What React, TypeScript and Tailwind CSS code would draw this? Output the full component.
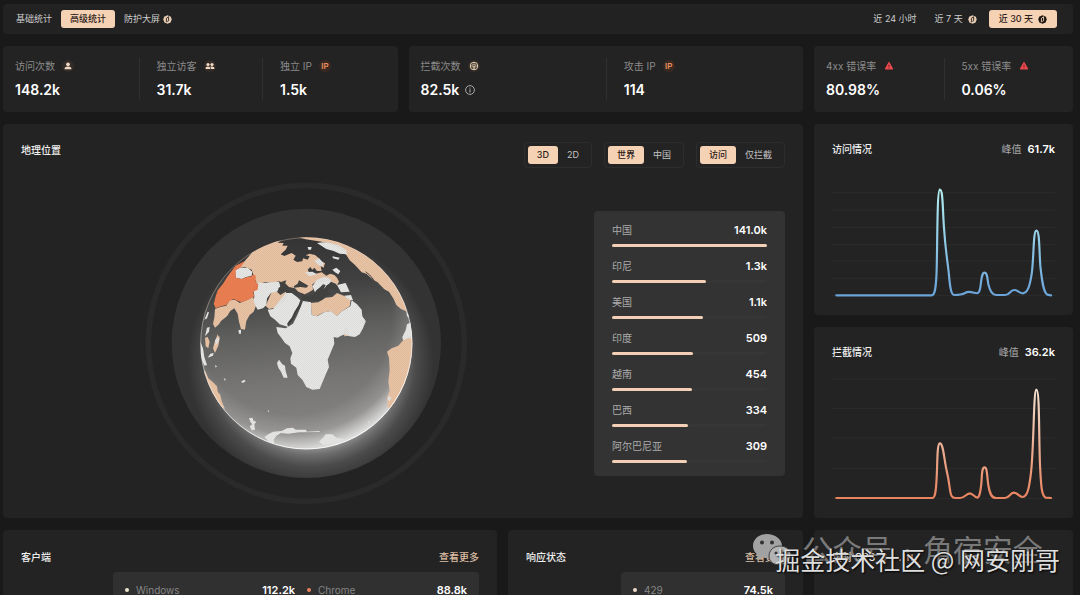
import React from "react";

type Chart = { id: string; top: number; grid: number[]; path: string; from: string; to: string };

const visitChart: Chart = {
  id: "visit",
  top: 0,
  grid: [68, 120, 172, 224, 273, 325, 376],
  from: "#b5f0f2",
  to: "#6aa3d8",
  path: "M79 376H366C376 376 379 355 381 310C384 235 382 60 391 59C401 59 399 120 404 180C408 240 413 265 418 310C421 345 424 375 434 375C448 375 458 374 467 369C476 363 484 365 493 368C504 371 509 373 513 352C517 325 517 308 526 308C534 308 534 325 537 342C541 360 546 374 560 375H588C602 375 602 360 615 360C625 360 630 369 641 370C656 369 662 348 668 310C675 255 672 183 682 182C692 182 690 240 694 290C699 335 703 368 715 374L726 376",
};

const blockChart: Chart = {
  id: "block",
  top: 159,
  grid: [177, 265, 354, 445, 535],
  from: "#f1e0cf",
  to: "#e8835f",
  path: "M79 534H368C377 534 379 515 381 480C384 435 382 371 391 370C401 370 403 410 410 445C416 470 418 482 421 505C424 528 427 534 438 534H452C466 534 470 521 481 520C491 520 495 533 504 533C511 532 513 515 516 492C518 465 517 442 526 442C534 442 533 470 537 495C541 520 546 534 560 534H587C601 534 602 519 614 518C626 518 629 531 640 531C656 531 661 498 666 455C675 370 673 210 682 209C692 209 689 350 693 440C696 500 698 528 710 533L726 534",
};

const countries = [
  { name: "中国", value: "141.0k", share: 100 },
  { name: "印尼", value: "1.3k", share: 60.5 },
  { name: "美国", value: "1.1k", share: 59 },
  { name: "印度", value: "509", share: 52.5 },
  { name: "越南", value: "454", share: 51.5 },
  { name: "巴西", value: "334", share: 49 },
  { name: "阿尔巴尼亚", value: "309", share: 48.4 },
];

function ProBadge({ dark = false }: { dark?: boolean }) {
  const fill = dark ? "#1b1512" : "#e9ccb4";
  const mark = dark ? "#f6d2b4" : "#29231f";
  return (
    <svg viewBox="0 0 18 18" className="size-[9px] shrink-0" aria-hidden="true">
      <path d="M9 0.3 15.8 3.6 17.4 9 15.2 14.8 9 17.7 2.8 14.8 0.6 9 2.2 3.6Z" fill={fill} />
      <path d="M6.800 14.500V6.500L11.200 3.500V11.500L8.500 13" stroke={mark} strokeWidth="1.800" fill="none" />
    </svg>
  );
}

function UserIcon() {
  return (
    <svg viewBox="0 0 24 24" className="size-3 shrink-0" aria-hidden="true">
      <circle cx="12" cy="12" r="12" fill="#332c28" />
      <circle cx="12" cy="8.6" r="3.7" fill="#f3d9c1" />
      <path d="M5 18.6C5 14.2 8 13 12 13s7 1.2 7 5.6Z" fill="#f3d9c1" />
    </svg>
  );
}

function UsersIcon() {
  return (
    <svg viewBox="0 0 24 24" className="size-3 shrink-0" aria-hidden="true">
      <circle cx="12" cy="12" r="12" fill="#332c28" />
      <circle cx="8" cy="9" r="3.200" fill="#f3d9c1" />
      <circle cx="16" cy="9" r="3.200" fill="#f3d9c1" />
      <path d="M3 18C3 14 5 12.800 8 12.800s4.400 1.200 4.400 5.200ZM13.600 18C13.600 15.500 13.300 14.300 12.500 13.400 13.500 12.900 14.700 12.800 16 12.800 19 12.800 21 14 21 18Z" fill="#f3d9c1" />
    </svg>
  );
}

function IpIcon() {
  return (
    <span className="flex h-3 w-3 items-center justify-center rounded-full bg-[#3a2920] text-[8px] leading-3 font-semibold text-[#e9925f]">
      IP
    </span>
  );
}

function ShieldIcon() {
  return (
    <svg viewBox="0 0 24 24" className="size-3 shrink-0" aria-hidden="true">
      <circle cx="12" cy="12" r="12" fill="#332c28" />
      <circle cx="12" cy="12" r="7.500" stroke="#ecd6b4" strokeWidth="2" fill="none" />
      <path d="M8.800 14.500A4 4 0 1 1 15.200 14.500" stroke="#ecd6b4" strokeWidth="1.800" fill="none" />
      <path d="M12 10 13.600 12.500 13 18H11L10.400 12.500Z" fill="#ecd6b4" />
    </svg>
  );
}

function WarnIcon() {
  return (
    <svg viewBox="0 0 24 24" className="size-3 shrink-0" aria-hidden="true">
      <path d="M12 4.500 19.500 18H4.500Z" fill="#ee4a4e" stroke="#ee4a4e" strokeWidth="2" strokeLinejoin="round" />
      <path d="M12 9.500V13.500M12 15.300V17" stroke="#4a1c1e" strokeWidth="1.800" />
    </svg>
  );
}

function InfoIcon() {
  return (
    <svg viewBox="0 0 20 20" className="size-[10px] shrink-0" aria-hidden="true">
      <circle cx="10" cy="10" r="8.800" fill="none" stroke="#c9c9c9" strokeWidth="1.600" />
      <path d="M10 5.200V7.200M10 8.800V15" stroke="#c9c9c9" strokeWidth="1.800" />
    </svg>
  );
}

function Stat({ label, value, icon, info }: { label: string; value: string; icon: React.ReactNode; info?: boolean }) {
  return (
    <div className="border-l border-[#303030] pl-[17px] first:border-l-0 first:pl-0">
      <div className="flex h-4 items-center gap-[7px] text-[10px] leading-4 text-[#8b8b8b]">
        <span className="whitespace-nowrap">{label}</span>
        {icon}
      </div>
      <div className="mt-1.5 flex h-5 items-center gap-1.5 text-[14px] leading-5 font-semibold text-white">
        {value}
        {info && <InfoIcon />}
      </div>
    </div>
  );
}

function StatCard({ columns, children }: { columns: string; children: React.ReactNode }) {
  return <section className={`grid rounded-sm bg-[#232323] p-3 ${columns}`}>{children}</section>;
}

function Toggle({ label, options }: { label: string; options: [string, string] }) {
  return (
    <div role="group" aria-label={label} className="flex rounded-sm border border-[#2d2d2d] p-[3px] text-[9px] leading-[18px]">
      <button type="button" aria-pressed="true" className="rounded-[3px] bg-[#f6d2b4] px-[9px] font-medium text-[#2a2019]">
        {options[0]}
      </button>
      <button type="button" aria-pressed="false" className="rounded-[3px] px-[9px] text-[#c4c4c4]">
        {options[1]}
      </button>
    </div>
  );
}

function TrendCard({ title, peak, chart }: { title: string; peak: string; chart: Chart }) {
  return (
    <section className="rounded-sm bg-[#232323] px-[18px] pt-[17px] pb-[7px]">
      <div className="flex items-center justify-between text-[10px] leading-4">
        <h2 className="font-medium text-[#f0f0f0]">{title}</h2>
        <p className="flex gap-1.5 text-[#a8a8a8]">
          峰值 <strong className="text-[11px] font-semibold text-white">{peak}</strong>
        </p>
      </div>
      <svg
        viewBox={`66 ${chart.top} 672 414`}
        preserveAspectRatio="none"
        className="mt-[13px] h-[138px] w-full"
        role="img"
        aria-label={title}
      >
        <defs>
          <linearGradient id={chart.id} gradientUnits="userSpaceOnUse" x1="0" x2="0" y1={chart.top + 50} y2={chart.top + 376}>
            <stop offset="0" stopColor={chart.from} />
            <stop offset="1" stopColor={chart.to} />
          </linearGradient>
        </defs>
        {chart.grid.map((y) => (
          <path key={y} d={`M66 ${y}H738`} stroke="#2c2c2c" strokeWidth="3" />
        ))}
        <path d={chart.path} fill="none" stroke={`url(#${chart.id})`} strokeWidth="6.500" strokeLinecap="round" />
      </svg>
    </section>
  );
}

function Globe() {
  return (
    <svg viewBox="0 0 1020 1020" className="mt-[7px] size-[340px] shrink-0" role="img" aria-label="地理位置">
      <defs>
        <clipPath id="ball"><circle cx="502" cy="505" r="318" /></clipPath>
        <radialGradient id="halo" gradientUnits="userSpaceOnUse" cx="515" cy="560" r="370">
          <stop offset="0.680" stopColor="#fff" stopOpacity="0.500" />
          <stop offset="0.760" stopColor="#fff" stopOpacity="0.280" />
          <stop offset="0.850" stopColor="#fff" stopOpacity="0.120" />
          <stop offset="1" stopColor="#fff" stopOpacity="0" />
        </radialGradient>
        <linearGradient id="sea" x1="0.450" x2="0.550" y1="0" y2="1">
          <stop offset="0" stopColor="#343434" />
          <stop offset="0.220" stopColor="#404040" />
          <stop offset="0.450" stopColor="#60605f" />
          <stop offset="0.680" stopColor="#777674" />
          <stop offset="1" stopColor="#8a8987" />
        </linearGradient>
        <radialGradient id="rim" gradientUnits="userSpaceOnUse" cx="460" cy="420" r="415">
          <stop offset="0.720" stopColor="#fff" stopOpacity="0" />
          <stop offset="0.860" stopColor="#fff" stopOpacity="0.160" />
          <stop offset="1" stopColor="#fff" stopOpacity="0.800" />
        </radialGradient>
        <linearGradient id="edge" x1="0" x2="0.400" y1="0" y2="1">
          <stop offset="0" stopColor="#f0c8a8" stopOpacity="0.250" />
          <stop offset="0.500" stopColor="#eee" stopOpacity="0.500" />
          <stop offset="1" stopColor="#fff" stopOpacity="0.850" />
        </linearGradient>
        <pattern id="dots" width="6" height="6" patternUnits="userSpaceOnUse">
          <circle cx="1.500" cy="1.500" r="1.100" fill="#55504b" fillOpacity="0.220" />
          <circle cx="4.500" cy="4.500" r="1.100" fill="#55504b" fillOpacity="0.220" />
        </pattern>
        <g id="beige">
          <path d="M312 264 340 232 378 210 405 198 428 194 416 203 434 204 430 212 446 212 440 224 425 238 436 243 458 234 470 242 463 254 474 261 490 259 492 250 506 254 512 244 500 241 512 236 528 240 540 250 548 260 558 264 554 278 545 274 548 288 534 288 526 278 520 284 514 276 506 284 510 292 524 298 548 292 562 302 574 296 586 300 594 308 600 320 594 330 578 326 562 318 548 322 532 320 520 328 522 344 510 352 497 358 478 350 468 340 450 336 440 326 420 319 398 324 380 321 358 328 350 318 344 302 338 284 318 276 296 280Z" />
          <path d="M380 392 390 370 398 352 414 350 424 360 440 350 446 362 440 376 426 388 408 398 390 402Z" />
          <path d="M228 402 244 396 262 392 272 376 288 374 302 384 322 376 342 366 352 390 344 410 332 420 322 438 318 464 306 462 300 440 296 416 286 400 274 408 264 424 246 438 240 448 228 458 222 446 226 428Z" />
          <path d="M516 384 538 382 560 368 580 366 594 354 618 364 636 372 632 394 610 408 594 422 572 408 550 414 532 424 518 420Z" />
          <path d="M614 460 628 458 630 482 616 484ZM662 440 674 430 680 440 674 452Z" />
          <path d="M478 187 540 182 610 192 680 225 740 274 788 340 804 410 786 402 772 390 764 372 750 350 734 342 716 322 704 316 682 296 668 292 648 270 632 256 622 240 606 226 574 208 548 200 520 196 500 193Z" />
          <path d="M826 470 810 482 796 492 778 512 758 520 744 530 750 548 752 586 748 620 752 648 744 668 746 700 780 690 830 620Z" />
          <path d="M188 580 200 590 208 610 222 622 234 634 236 650 244 660 248 678 258 702 236 690 196 620Z" />
          <path d="M198 488 206 486 212 500 208 520 200 514ZM236 478 242 492 238 512 228 534 222 520 228 498Z" />
        </g>
        <g id="white">
          <path d="M288 286 302 278 326 278 340 290 338 302 322 306 308 312 290 308Z" />
          <path d="M342 338 352 322 374 324 394 322 420 320 424 334 414 350 396 354 384 370 382 390 372 400 356 404 344 382 346 362Z" />
          <path d="M424 374 440 354 458 354 474 366 484 376 478 392 466 410 458 428 444 446 448 456 422 448 408 434 394 424 386 404 402 402Z" />
          <path d="M492 378 516 382 518 420 534 424 556 412 574 408 594 422 610 408 634 394 638 376 654 388 668 404 670 424 680 438 672 460 662 478 648 486 632 484 618 478 606 482 596 488 584 486 586 506 576 530 566 554 570 576 562 594 552 618 542 642 520 644 502 636 490 614 476 600 472 578 456 566 454 550 460 534 452 514 438 504 428 490 416 474 412 456 440 460 462 446 474 422 484 398Z" />
          <path d="M520 334 534 314 554 306 572 310 580 324 564 330 552 344 560 350 544 360 528 352ZM594 330 620 324 632 350 606 352Z" />
          <path d="M616 362 636 360 642 376 630 374Z" />
          <path d="M526 258 540 250 554 264 550 274 538 270ZM580 284 592 278 604 288 598 298 588 292ZM498 292 520 290 534 298 512 304Z" />
          <path d="M534 204 552 202 574 204 602 212 622 226 624 238 602 236 584 228 562 222ZM506 216 518 216 516 224 508 224ZM580 244 602 248 598 254 582 250Z" />
          <path d="M420 554 430 568 438 572 440 588 446 608 434 608 426 590 418 578 414 564Z" />
          <path d="M800 466 804 448 820 440 826 490 808 490 792 496 790 486ZM802 408 814 430 804 424Z" />
          <path d="M376 786 388 778 402 770 428 768 444 760 462 758 470 764 500 764 504 770 542 768 542 771 480 772 448 776 426 774 412 782 404 794 406 806 390 800ZM540 800 552 788 560 778 580 778 592 788 618 792 590 806 552 810Z" />
          <path d="M330 730 340 728 344 738 352 740 346 748 348 764 338 766 332 754 340 748 334 740ZM306 620 316 614 320 618 312 624ZM254 610 260 612 258 618ZM386 706 391 708 388 712ZM298 466 306 464 306 476 300 476Z" />
          <path d="M184 500 192 520 196 546 204 570 196 572 186 548ZM204 458 212 456 210 470 198 484ZM228 496 242 484 238 500 230 512ZM214 536 224 534 222 542 206 548ZM228 570 234 574 230 578ZM196 434 206 410 210 412 204 430ZM748 662 758 668 752 678 746 674ZM688 738 694 742 690 746Z" />
        </g>
        <path
          id="china"
          d="M318 258 304 278 290 286 290 308 308 312 324 306 338 304 342 298 350 302 350 320 358 328 356 344 342 350 346 364 328 374 308 382 296 378 286 372 274 376 262 390 246 394 230 400 224 386 230 364 236 346 252 326 266 304 290 272Z"
        />
        <g id="inland">
          <path d="M428 320 442 316 438 328 444 334 432 350 420 350 418 340 428 332Z" />
          <path d="M464 334 476 326 480 316 494 324 508 332 502 338 484 336 466 338Z" />
          <path d="M486 358 504 362 524 358 532 346 544 336 552 328 560 330 554 342 566 340 568 354 582 356 562 362 548 376 520 378 490 374Z" />
          <path d="M576 320 590 326 598 342 590 346 578 338 566 344 564 332Z" />
          <path d="M488 378 484 396 472 414 462 436 446 452 448 442 460 426 474 398Z" />
        </g>
      </defs>
      <circle cx="502" cy="505" r="474" fill="none" stroke="#2a2a2a" strokeWidth="17" />
      <circle cx="502" cy="505" r="404" fill="#333333" />
      <circle cx="502" cy="505" r="404" fill="url(#halo)" />
      <circle cx="502" cy="505" r="318" fill="url(#sea)" />
      <g clipPath="url(#ball)">
        <circle cx="502" cy="505" r="318" fill="url(#rim)" />
        <use href="#beige" fill="#e8c2a3" />
        <use href="#white" fill="#e6e6e4" />
        <use href="#china" fill="#e67c50" />
        <use href="#beige" fill="url(#dots)" />
        <use href="#white" fill="url(#dots)" />
        <use href="#inland" fill="#414140" />
        <path d="M680 290 696 304 712 326 728 336 740 350M250 318 232 342M226 376 212 400" stroke="#4a4947" strokeWidth="3" fill="none" />
      </g>
      <circle cx="502" cy="505" r="317" fill="none" stroke="url(#edge)" strokeWidth="3" />
    </svg>
  );
}

function Entry({ color, name, value }: { color: string; name: string; value: string }) {
  return (
    <li className="flex items-center gap-[7px]">
      <span className={`size-1 rounded-full ${color}`} />
      <span className="flex-1 text-[#858585]">{name}</span>
      <strong className="text-[11px] font-semibold text-white">{value}</strong>
    </li>
  );
}

function Watermark() {
  return (
    <div className="pointer-events-none absolute right-5 bottom-0 h-[66px] w-[308px]">
      <svg viewBox="0 0 40 34" className="absolute top-1 left-0 h-[34px] w-10" aria-hidden="true">
        <path d="M15 1C7 1 1 6 1 13c0 4 2 7 5 9l-1 5 5-3c2 1 4 1 6 1 8 0 14-5 14-12S23 1 15 1Z" fill="#a2a2a2" />
        <circle cx="10" cy="9.500" r="2" fill="#303030" />
        <circle cx="20" cy="9.500" r="2" fill="#303030" />
        <path d="M28 13c-6 0-11 4-11 10s5 9 11 9c1 0 3 0 4-1l4 2-1-4c2-2 4-4 4-7 0-5-5-9-11-9Z" fill="#b4b4b4" stroke="#404040" />
        <circle cx="24" cy="20" r="1.500" fill="#303030" />
        <circle cx="32" cy="20" r="1.500" fill="#303030" />
      </svg>
      <p className="absolute top-0 left-[50px] flex gap-[11px] text-[30px] leading-[42px] whitespace-nowrap text-[#929292]/80">
        <span>公众号</span>
        <span>·</span>
        <span>角宿安全</span>
      </p>
      <p className="absolute top-3 right-0 text-[25px] leading-9 whitespace-nowrap text-[#dedede] [font-family:'Noto_Sans_CJK_SC',sans-serif] [text-shadow:1px_1px_2px_#000]">
        掘金技术社区 @ 网安刚哥
      </p>
    </div>
  );
}

export default function App() {
  return (
    <div className="relative h-screen overflow-hidden bg-[#191919] pt-1 pr-[7px] pl-[3px] text-white [font-family:Inter,'Noto_Sans_CJK_SC',sans-serif]">
      <header className="flex items-center justify-between rounded-sm bg-[#222222] py-1.5 pr-4 pl-[13px] text-[9px] leading-[18px] text-[#cfcfcf]">
        <nav className="flex items-center gap-[9px]">
          <button type="button">基础统计</button>
          <button type="button" className="rounded-[3px] bg-[#f6d2b4] px-[9px] font-medium text-[#2a2019]">高级统计</button>
          <button type="button" className="flex items-center gap-[3px]">防护大屏 <ProBadge /></button>
        </nav>
        <div className="flex items-center">
          <button type="button" className="mr-[18px]">近 24 小时</button>
          <button type="button" className="mr-3 flex items-center gap-[5px]">近 7 天 <ProBadge /></button>
          <button type="button" className="flex items-center gap-[5px] rounded-[3px] bg-[#f6d2b4] px-[10px] font-medium text-[#2a2019]">
            近 30 天 <ProBadge dark />
          </button>
        </div>
      </header>

      <main className="mt-3 grid grid-cols-[800fr_259fr] gap-x-[11px] gap-y-3">
        <div className="grid grid-cols-2 gap-[11px]">
          <StatCard columns="grid-cols-3">
            <Stat label="访问次数" value="148.2k" icon={<UserIcon />} />
            <Stat label="独立访客" value="31.7k" icon={<UsersIcon />} />
            <Stat label="独立 IP" value="1.5k" icon={<IpIcon />} />
          </StatCard>
          <StatCard columns="grid-cols-2">
            <Stat label="拦截次数" value="82.5k" icon={<ShieldIcon />} info />
            <Stat label="攻击 IP" value="114" icon={<IpIcon />} />
          </StatCard>
        </div>
        <StatCard columns="grid-cols-2">
          <Stat label="4xx 错误率" value="80.98%" icon={<WarnIcon />} />
          <Stat label="5xx 错误率" value="0.06%" icon={<WarnIcon />} />
        </StatCard>

        <section className="rounded-sm bg-[#232323] pr-[18px] pl-[18px] pt-[18px]">
          <div className="flex items-start justify-between">
            <h2 className="text-[10px] leading-4 font-medium text-[#f0f0f0]">地理位置</h2>
            <div className="flex gap-3">
              <Toggle label="视图" options={["3D", "2D"]} />
              <Toggle label="范围" options={["世界", "中国"]} />
              <Toggle label="类型" options={["访问", "仅拦截"]} />
            </div>
          </div>
          <div className="flex items-start">
            <div className="flex flex-1 justify-center pl-[3px]">
              <Globe />
            </div>
            <ul className="mt-[43px] flex w-[191px] flex-col gap-[11px] rounded-sm bg-[#333333] px-[18px] pt-[11px] pb-[13px]">
              {countries.map((c) => (
                <li key={c.name}>
                  <div className="flex justify-between text-[10px] leading-4 text-[#ababab]">
                    <span>{c.name}</span>
                    <strong className="text-[11px] font-semibold text-white">{c.value}</strong>
                  </div>
                  <div className="mt-1.5 h-[3px] rounded-full bg-[#363636]">
                    <div className="h-full rounded-full bg-[#f3d0b5]" style={{ width: `${c.share}%` }} />
                  </div>
                </li>
              ))}
            </ul>
          </div>
        </section>
        <div className="grid gap-3">
          <TrendCard title="访问情况" peak="61.7k" chart={visitChart} />
          <TrendCard title="拦截情况" peak="36.2k" chart={blockChart} />
        </div>

        <div className="grid grid-cols-[494fr_295fr] gap-[11px]">
          <section className="rounded-sm bg-[#232323] px-[18px] pt-[19px] pb-4">
            <div className="flex justify-between text-[10px] leading-4 font-medium">
              <h2 className="text-[#f0f0f0]">客户端</h2>
              <a href="#clients" className="text-[#dcbda3]">查看更多</a>
            </div>
            <ul className="mt-[7px] ml-[92px] grid grid-cols-[170fr_160fr] gap-3 rounded-sm bg-[#303030] px-3 py-2.5 text-[10px] leading-4">
              <Entry color="bg-[#efe6cf]" name="Windows" value="112.2k" />
              <Entry color="bg-[#e8835f]" name="Chrome" value="88.8k" />
            </ul>
          </section>
          <section className="rounded-sm bg-[#232323] px-[18px] pt-[19px] pb-4">
            <div className="flex justify-between text-[10px] leading-4 font-medium">
              <h2 className="text-[#f0f0f0]">响应状态</h2>
              <a href="#status" className="text-[#dcbda3]">查看更多</a>
            </div>
            <ul className="mt-[7px] ml-[95px] rounded-sm bg-[#303030] px-3 py-2.5 text-[10px] leading-4">
              <Entry color="bg-[#f1dccb]" name="429" value="74.5k" />
            </ul>
          </section>
        </div>
        <section className="rounded-sm bg-[#232323] px-[18px] pt-[19px] pb-4">
          <div className="flex items-center gap-6 text-[10px] leading-4">
            <h2 className="font-medium text-[#f0f0f0]">实时 QPS</h2>
            <svg viewBox="0 0 18 10" className="h-2.5 w-[18px]" aria-hidden="true">
              <path d="M1 9V7M5 9V1M9 9V4M13 9V2M17 9V6" stroke="#c98d6e" strokeWidth="1.500" />
            </svg>
          </div>
        </section>
      </main>
      <Watermark />
    </div>
  );
}
